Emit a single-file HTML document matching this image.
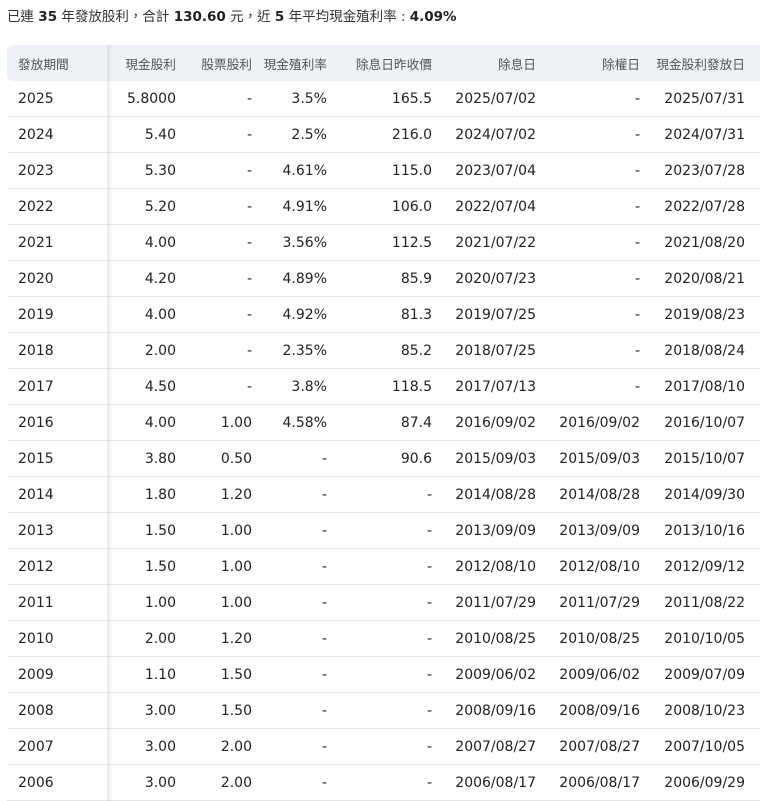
<!DOCTYPE html>
<html><head><meta charset="utf-8"><style>
body{margin:0;background:#fff;font-family:"DejaVu Sans","Noto Sans CJK TC",sans-serif;color:#222;width:760px;height:801px;overflow:hidden;position:relative}
.t{position:absolute;left:7px;top:7px;font-size:13.5px;line-height:20px;color:#333}
.t b{color:#222}
table{position:absolute;left:7px;top:45px;border-collapse:collapse;width:753px;font-size:14px}
th{background:#eef1f5;color:#555;font-weight:normal;height:36px;padding:0;text-align:right;font-family:"Noto Sans CJK TC",sans-serif;font-size:12.7px}
td{height:34px;border-bottom:1px solid #e4e6ea;padding:1px 0 0;text-align:right;white-space:nowrap}
th:first-child,td:first-child{text-align:left;padding-left:11px;width:89px}
th:first-child{border-radius:6px 0 0 6px}
.c2{width:69px}.c3{width:76px}.c4{width:75px}.c5{width:105px}.c6{width:104px}.c7{width:104px}
tr>*:last-child{padding-right:15px}
.sh{position:absolute;left:107px;top:45px;width:6px;height:756px;background:linear-gradient(to right,rgba(0,0,0,.08),rgba(0,0,0,0))}
</style></head><body>
<div class="t">已連 <b>35</b> 年發放股利，合計 <b>130.60</b> 元，近 <b>5</b> 年平均現金殖利率 : <b>4.09%</b></div>
<table>
<tr><th>發放期間</th><th class="c2">現金股利</th><th class="c3">股票股利</th><th class="c4">現金殖利率</th><th class="c5">除息日昨收價</th><th class="c6">除息日</th><th class="c7">除權日</th><th>現金股利發放日</th></tr>
<tr><td>2025</td><td>5.8000</td><td>-</td><td>3.5%</td><td>165.5</td><td>2025/07/02</td><td>-</td><td>2025/07/31</td></tr>
<tr><td>2024</td><td>5.40</td><td>-</td><td>2.5%</td><td>216.0</td><td>2024/07/02</td><td>-</td><td>2024/07/31</td></tr>
<tr><td>2023</td><td>5.30</td><td>-</td><td>4.61%</td><td>115.0</td><td>2023/07/04</td><td>-</td><td>2023/07/28</td></tr>
<tr><td>2022</td><td>5.20</td><td>-</td><td>4.91%</td><td>106.0</td><td>2022/07/04</td><td>-</td><td>2022/07/28</td></tr>
<tr><td>2021</td><td>4.00</td><td>-</td><td>3.56%</td><td>112.5</td><td>2021/07/22</td><td>-</td><td>2021/08/20</td></tr>
<tr><td>2020</td><td>4.20</td><td>-</td><td>4.89%</td><td>85.9</td><td>2020/07/23</td><td>-</td><td>2020/08/21</td></tr>
<tr><td>2019</td><td>4.00</td><td>-</td><td>4.92%</td><td>81.3</td><td>2019/07/25</td><td>-</td><td>2019/08/23</td></tr>
<tr><td>2018</td><td>2.00</td><td>-</td><td>2.35%</td><td>85.2</td><td>2018/07/25</td><td>-</td><td>2018/08/24</td></tr>
<tr><td>2017</td><td>4.50</td><td>-</td><td>3.8%</td><td>118.5</td><td>2017/07/13</td><td>-</td><td>2017/08/10</td></tr>
<tr><td>2016</td><td>4.00</td><td>1.00</td><td>4.58%</td><td>87.4</td><td>2016/09/02</td><td>2016/09/02</td><td>2016/10/07</td></tr>
<tr><td>2015</td><td>3.80</td><td>0.50</td><td>-</td><td>90.6</td><td>2015/09/03</td><td>2015/09/03</td><td>2015/10/07</td></tr>
<tr><td>2014</td><td>1.80</td><td>1.20</td><td>-</td><td>-</td><td>2014/08/28</td><td>2014/08/28</td><td>2014/09/30</td></tr>
<tr><td>2013</td><td>1.50</td><td>1.00</td><td>-</td><td>-</td><td>2013/09/09</td><td>2013/09/09</td><td>2013/10/16</td></tr>
<tr><td>2012</td><td>1.50</td><td>1.00</td><td>-</td><td>-</td><td>2012/08/10</td><td>2012/08/10</td><td>2012/09/12</td></tr>
<tr><td>2011</td><td>1.00</td><td>1.00</td><td>-</td><td>-</td><td>2011/07/29</td><td>2011/07/29</td><td>2011/08/22</td></tr>
<tr><td>2010</td><td>2.00</td><td>1.20</td><td>-</td><td>-</td><td>2010/08/25</td><td>2010/08/25</td><td>2010/10/05</td></tr>
<tr><td>2009</td><td>1.10</td><td>1.50</td><td>-</td><td>-</td><td>2009/06/02</td><td>2009/06/02</td><td>2009/07/09</td></tr>
<tr><td>2008</td><td>3.00</td><td>1.50</td><td>-</td><td>-</td><td>2008/09/16</td><td>2008/09/16</td><td>2008/10/23</td></tr>
<tr><td>2007</td><td>3.00</td><td>2.00</td><td>-</td><td>-</td><td>2007/08/27</td><td>2007/08/27</td><td>2007/10/05</td></tr>
<tr><td>2006</td><td>3.00</td><td>2.00</td><td>-</td><td>-</td><td>2006/08/17</td><td>2006/08/17</td><td>2006/09/29</td></tr>
</table>
<div class="sh"></div>
</body></html>
